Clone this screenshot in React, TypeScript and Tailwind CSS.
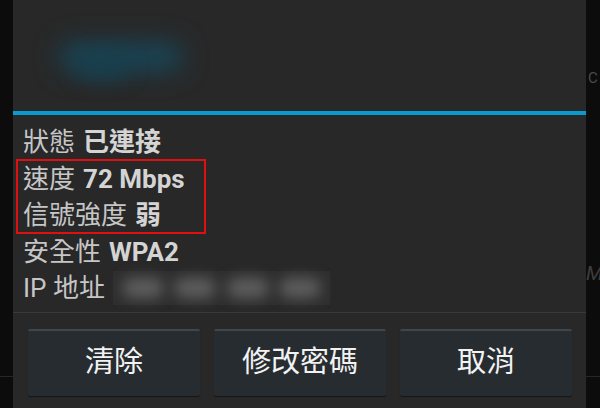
const rows: { label: string; value?: string; blurred?: boolean }[] = [
  { label: "狀態", value: "已連接" },
  { label: "速度", value: "72 Mbps" },
  { label: "信號強度", value: "弱" },
  { label: "安全性", value: "WPA2" },
  { label: "IP 地址", blurred: true },
];

const buttons = ["清除", "修改密碼", "取消"];

function EdgeStrip({ letter, letterTop, second, secondTop }: { letter?: string; letterTop?: string; second?: string; secondTop?: string }) {
  return (
    <div className="relative h-full overflow-hidden bg-[#0c0c0c]">
      {letter && (
        <span className={`absolute left-[2px] ${letterTop} text-[15px] leading-none text-[#4a4a4a]`}>{letter}</span>
      )}
      {second && (
        <span className={`absolute left-0 ${secondTop} text-[20px] italic leading-none text-[#3e3e3e]`}>{second}</span>
      )}
      <div className="absolute left-0 right-0 top-[376px] h-px bg-[#262626]" />
    </div>
  );
}

export default function App() {
  return (
    <div
      className="flex h-[408px] w-[600px] overflow-hidden bg-[#0c0c0c]"
      style={{ fontFamily: "Roboto, 'Noto Sans CJK TC', 'Noto Sans', sans-serif" }}
    >
      <div className="w-[13px] shrink-0">
        <EdgeStrip />
      </div>

      <div className="relative flex w-[573px] shrink-0 flex-col bg-[#282828]">
        {/* blurred network name */}
        <div className="flex h-[111px] items-start pl-[36px] pt-[34px]">
          <div className="relative h-[50px] w-[145px]">
            <div className="absolute left-[10px] top-[8px] h-[30px] w-[124px] rounded-full bg-[#194556] blur-[12px]" />
            <div className="absolute left-[28px] top-[22px] h-[22px] w-[50px] rounded-full bg-[#183f4e] blur-[10px]" />
          </div>
        </div>
        <div className="h-[4px] bg-[#0a9ad0]" />

        <div className="flex flex-col pl-[10px] pt-[9px] text-[26px] leading-[36.5px] text-[#c6c6c6]">
          {rows.map((r) => (
            <div key={r.label} className="flex h-[36.5px] items-center gap-[8px] whitespace-nowrap">
              <span>{r.label}</span>
              {r.value && <span className="font-bold text-[#d4d4d4]">{r.value}</span>}
              {r.blurred && (
                <div className="flex h-[34px] w-[217px] items-center justify-around bg-[#2e2e2e] px-1">
                  {[0, 1, 2, 3].map((i) => (
                    <div key={i} className="h-[20px] w-[42px] rounded-full bg-[#5e5e5e] blur-[7px]" />
                  ))}
                </div>
              )}
            </div>
          ))}
        </div>

        {/* highlight annotation */}
        <div className="absolute left-[3px] top-[159px] h-[75px] w-[190px] border-2 border-[#e01010]" />

        <div className="mt-[5px] h-px bg-[#3a3a3a]" />

        <div className="flex gap-[14px] pl-[15px] pr-[14px] pt-[16px]">
          {buttons.map((b) => (
            <button
              key={b}
              className="flex h-[67px] flex-1 items-center justify-center rounded-[2px] border-t-2 border-[#41464b] bg-[#272c31] text-[29px] text-[#f2f2f2] shadow-[0_1px_1px_#151515]"
            >
              {b}
            </button>
          ))}
        </div>
      </div>

      <div className="w-[14px] shrink-0">
        <EdgeStrip letter="C" letterTop="top-[71px]" second="M" secondTop="top-[263px]" />
      </div>
    </div>
  );
}
